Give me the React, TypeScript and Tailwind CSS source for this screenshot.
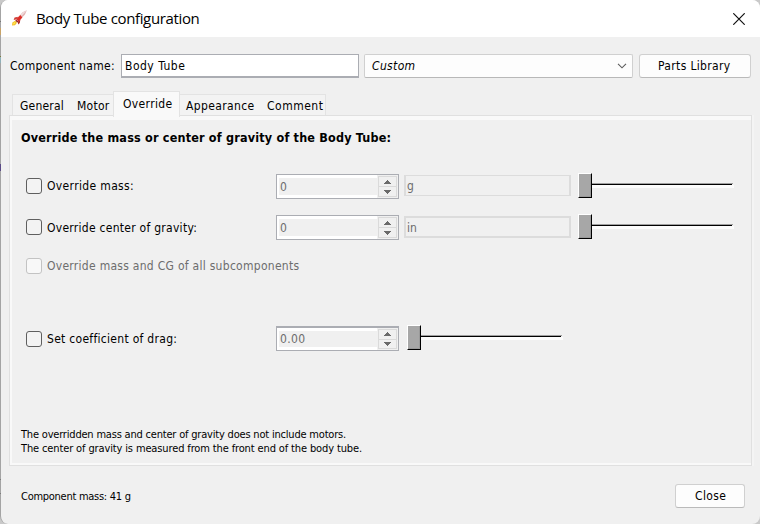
import type { ReactNode } from 'react';

function CheckBox({ disabled = false }: { disabled?: boolean }) {
  return (
    <span
      className={
        disabled
          ? 'size-4 shrink-0 rounded-[3px] border border-[#c3c3c3] bg-[#f8f8f8]'
          : 'size-4 shrink-0 rounded-[3px] border border-[#5f5f5f] bg-[#f3f3f3]'
      }
    />
  );
}

function Spinner({ value, className = '' }: { value: string; className?: string }) {
  return (
    <div className={`flex h-[25px] w-[123px] shrink-0 border border-[#abadb3] bg-white ${className}`}>
      <div className="my-[3px] ml-[2px] flex w-[98px] items-center bg-[#f0f0f0] pl-px tracking-[0.35px] text-[#6d6d6d]">
        <span>{value}</span>
      </div>
      <div className="flex flex-1 flex-col bg-[#f0f0f0] px-px py-px">
        <div className="flex flex-1 items-center justify-center border border-[#dadada]">
          <svg width="7" height="4" viewBox="0 0 7 4" shapeRendering="crispEdges">
            <path d="M3 0h1v1h1v1h1v1h1v1H0V3h1V2h1V1h1z" fill="#6a6a6a" />
          </svg>
        </div>
        <div className="-mt-px flex flex-1 items-center justify-center border border-[#dadada]">
          <svg width="7" height="4" viewBox="0 0 7 4" shapeRendering="crispEdges">
            <path d="M0 0h7v1H6v1H5v1H4v1H3V3H2V2H1V1H0z" fill="#6a6a6a" />
          </svg>
        </div>
      </div>
    </div>
  );
}

function Slider() {
  return (
    <div className="flex h-[25px] shrink-0">
      <div className="w-[14px] border-t border-r border-b border-l border-t-white border-r-black border-b-black border-l-white bg-[#a7a7a7] shadow-[inset_-1px_-1px_0_#999]" />
      <div className="w-[142px] pt-[10px]">
        <div className="h-px w-[141px] bg-[#9f9f9f]" />
        <div className="h-px w-[140px] bg-black" />
        <div className="h-[3px] bg-[#fcfcfc]" />
      </div>
    </div>
  );
}

function Row({ children, className = '' }: { children: ReactNode; className?: string }) {
  return <div className={`flex items-start ${className}`}>{children}</div>;
}

function RocketIcon() {
  return (
    <svg width="17" height="17" viewBox="0 0 17 17">
      <path d="M15.8 0.3 L11.6 2.2 L8.8 5.4 L10.9 7.8 L14 4.6 Z" fill="#e2b3b3" />
      <path d="M15.8 0.3 L12 2.2 L9.6 4.8 L10.7 6 Z" fill="#f0dcdc" />
      <path d="M9.2 5 L5.2 9.3 L7.6 11.8 L11.4 7.4 Z" fill="#dd2e27" />
      <path d="M7.4 6.8 L3.6 7.6 L2.6 10 L5.4 9.2 Z" fill="#cf3b34" />
      <path d="M9.4 9.6 L8.8 13 L7.2 14.6 L6.8 12 Z" fill="#b02c26" />
      <path d="M5 9.4 L7.4 11.8 L6.2 12.4 L4.4 10.8 Z" fill="#8e1614" />
      <path d="M4.2 10.8 L1.4 12.4 L1 15.6 L4 15.3 L6 12.8 Z" fill="#f3bf2b" />
      <path d="M4 11.8 L2.2 13 L2 14.7 L4.2 13.8 Z" fill="#ffe24a" />
    </svg>
  );
}

// Slivers of the window behind that show along the left edge.
function BackdropEdge() {
  return (
    <div className="absolute top-0 left-0 flex w-px flex-col">
      <div className="mt-[21px] h-px bg-[#777]" />
      <div className="mt-[6px] h-[7px] bg-[#c9a468]" />
      <div className="mt-[21px] h-px bg-[#7d7a3c]" />
      <div className="h-[6px] bg-[#8fb0b8]" />
      <div className="mt-[101px] h-[7px] bg-[#5a4a86]" />
      <div className="mt-[308px] h-px bg-[#7c7c7c]" />
      <div className="mt-[13px] h-px bg-[#7c7c7c]" />
    </div>
  );
}

export default function App() {
  return (
    <div className="relative h-[524px] w-[760px] overflow-hidden bg-[#c9c9c9] font-['DejaVu_Sans_Condensed','DejaVu_Sans',sans-serif] text-[12px] leading-[14px] whitespace-nowrap text-black">
      <div className="flex h-[524px] flex-col overflow-hidden rounded-[8px] border-l border-[#a4a4a4] bg-[#f0f0f0]">
        <header className="flex h-[37px] shrink-0 items-center bg-white pr-[15px] pl-[10px]">
          <RocketIcon />
          <h1 className="-mt-px ml-[8px] font-['Open_Sans',sans-serif] text-[15px] leading-[20px] tracking-[-0.36px]">
            Body Tube configuration
          </h1>
          <svg className="ml-auto" width="12" height="12" viewBox="0 0 12 12">
            <path d="M0.3 0.3L11.7 11.7M11.7 0.3L0.3 11.7" stroke="#111" strokeWidth="1.2" />
          </svg>
        </header>

        <div className="mt-[17px] flex h-[24px] shrink-0 items-center pl-[9px]">
          <span className="w-[111px] tracking-[0.3px]">Component name:</span>
          <div className="flex h-[24px] w-[238px] items-center border border-b-2 border-[#abadb3] bg-white pl-[3px] tracking-[0.5px]">
            <span>Body Tube</span>
          </div>
          <div className="ml-[5px] flex h-[24px] w-[269px] items-center justify-between rounded-[2px] border border-[#d0d0d0] border-b-[#b8b8b8] bg-[#fdfdfd] pr-[5px] pl-[7px]">
            <span className="tracking-[0.35px] italic">Custom</span>
            <svg width="10" height="6" viewBox="0 0 10 6" fill="none">
              <path d="M1 0.8L5 4.8L9 0.8" stroke="#5c5c5c" strokeWidth="1.1" />
            </svg>
          </div>
          <button className="ml-[6px] flex h-[24px] w-[112px] items-center rounded-[3px] border border-[#d0d0d0] border-b-[#bababa] bg-[#fdfdfd] pl-[18px] tracking-[0.35px]">
            Parts Library
          </button>
        </div>

        <nav className="mt-[13px] ml-[11px] flex h-[24px] shrink-0 items-end">
          <div className="flex h-[21px] w-[101px] items-center border-t border-l border-[#e3e3e3] bg-[#f3f3f3] pt-[2px] pl-[7px]">
            <span className="w-[57px] tracking-[0.2px]">General</span>
            <span className="tracking-[0.25px]">Motor</span>
          </div>
          <div className="z-10 -mb-[2px] flex h-[26px] w-[67px] items-center border-x border-t border-[#e3e3e3] bg-[#f9f9f9] pb-[2px] pl-[9px] tracking-[0.35px]">
            Override
          </div>
          <div className="flex h-[21px] w-[146px] items-center border-t border-r border-[#e3e3e3] bg-[#f3f3f3] pt-[2px] pl-[6px]">
            <span className="w-[81px] tracking-[0.36px]">Appearance</span>
            <span className="tracking-[0.5px]">Comment</span>
          </div>
        </nav>

        <main className="ml-[8px] h-[351px] w-[745px] shrink-0 border-r-2 border-[#f4f4f4]">
          <div className="flex h-[351px] w-[743px] flex-col border border-[#e0e0e0]">
            <div className="flex h-[349px] flex-col border-t-4 border-b-2 border-l-2 border-[#f9f9f9] pl-[9px]">
              <h2 className="mt-[11px] text-[12.5px] leading-[14px] font-bold tracking-[0.19px]">
                Override the mass or center of gravity of the Body Tube:
              </h2>

              <Row className="mt-[28px] h-[41px] pl-[5px]">
                <div className="mt-[5px] flex w-[250px] items-center gap-[5px]">
                  <CheckBox />
                  <span className="tracking-[0.35px]">Override mass:</span>
                </div>
                <Spinner value="0" className="mt-px" />
                <div className="mt-[2px] ml-[5px] flex h-[21px] w-[167px] items-center border border-x-2 border-[#dcdcdc] pt-px pl-px text-[#6d6d6d]">
                  g
                </div>
                <div className="ml-[7px]">
                  <Slider />
                </div>
              </Row>

              <Row className="h-[44px] pl-[5px]">
                <div className="mt-[5px] flex w-[250px] items-center gap-[5px]">
                  <CheckBox />
                  <span className="pt-px tracking-[0.27px]">Override center of gravity:</span>
                </div>
                <Spinner value="0" className="mt-px" />
                <div className="mt-[2px] ml-[5px] flex h-[22px] w-[167px] items-center border-2 border-[#dcdcdc] pt-[2px] pl-px text-[#6d6d6d]">
                  in
                </div>
                <div className="ml-[7px]">
                  <Slider />
                </div>
              </Row>

              <Row className="h-[67px] pl-[5px]">
                <div className="flex items-center gap-[5px]">
                  <CheckBox disabled />
                  <span className="tracking-[0.28px] text-[#6d6d6d]">
                    Override mass and CG of all subcomponents
                  </span>
                </div>
              </Row>

              <Row className="h-[103px] pl-[5px]">
                <div className="mt-[6px] flex w-[250px] items-center gap-[5px]">
                  <CheckBox />
                  <span className="tracking-[0.29px]">Set coefficient of drag:</span>
                </div>
                <Spinner value="0.00" className="mt-px border-t-2" />
                <div className="ml-[8px]">
                  <Slider />
                </div>
              </Row>

              <p className="text-[11px] tracking-[-0.195px]">
                The overridden mass and center of gravity does not include motors.
              </p>
              <p className="text-[11px] tracking-[-0.13px]">
                The center of gravity is measured from the front end of the body tube.
              </p>
            </div>
          </div>
        </main>

        <footer className="mt-[18px] flex h-[24px] shrink-0 items-center justify-between pr-[15px] pl-[20px]">
          <span className="pt-[2px] text-[11px] tracking-[-0.27px]">Component mass: 41 g</span>
          <button className="flex h-[24px] w-[70px] items-center rounded-[3px] border border-[#d0d0d0] border-b-[#bababa] bg-[#fdfdfd] pl-[19px] tracking-[0.35px]">
            Close
          </button>
        </footer>
      </div>
      <BackdropEdge />
    </div>
  );
}
